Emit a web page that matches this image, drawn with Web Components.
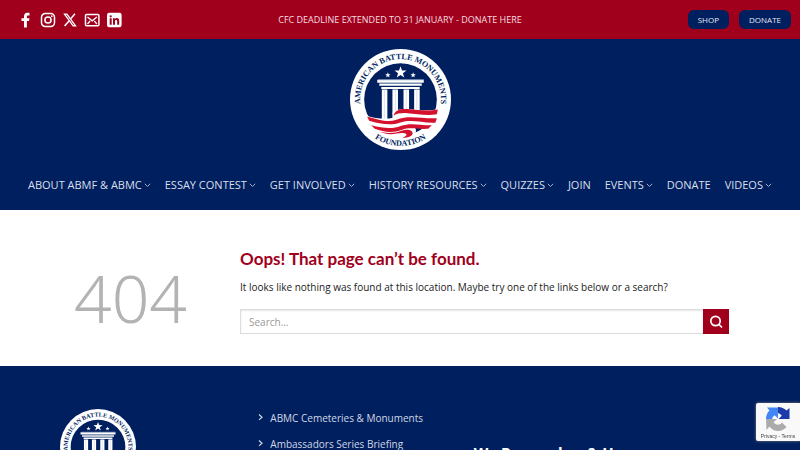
<!DOCTYPE html>
<html lang="en">
<head>
<meta charset="utf-8">
<meta name="viewport" content="width=device-width, initial-scale=1">
<title>Page not found - American Battle Monuments Foundation</title>
<style>
    html {
        scrollbar-width: none;
    }
    body {
        margin: 0;
        background: #fff;
        color: #222;
        font: 10px/16px "Open Sans", "Noto Sans", sans-serif;
        --navy: #001f5f;
        --red: #a0001c;
    }
</style>
</head>
<body>
<top-bar>
    <social-links slot="left"></social-links>
    CFC DEADLINE EXTENDED TO 31 JANUARY - DONATE HERE
    <pill-link slot="right" href="#shop">SHOP</pill-link>
    <pill-link slot="right" href="#donate">DONATE</pill-link>
</top-bar>
<site-header>
    <abmf-logo slot="logo"></abmf-logo>
    <nav-item href="#about" menu>ABOUT ABMF &amp; ABMC</nav-item>
    <nav-item href="#essay" menu>ESSAY CONTEST</nav-item>
    <nav-item href="#involved" menu>GET INVOLVED</nav-item>
    <nav-item href="#history" menu>HISTORY RESOURCES</nav-item>
    <nav-item href="#quizzes" menu>QUIZZES</nav-item>
    <nav-item href="#join">JOIN</nav-item>
    <nav-item href="#events" menu>EVENTS</nav-item>
    <nav-item href="#donate">DONATE</nav-item>
    <nav-item href="#videos" menu>VIDEOS</nav-item>
</site-header>
<not-found>
    <span slot="title">Oops! That page can’t be found.</span>
    It looks like nothing was found at this location. Maybe try one of the links below or a search?
    <search-form slot="search"></search-form>
</not-found>
<site-footer>
    <abmf-logo slot="logo"></abmf-logo>
    <footer-link href="#cemeteries">ABMC Cemeteries &amp; Monuments</footer-link>
    <footer-link href="#briefing">Ambassadors Series Briefing</footer-link>
    <span slot="motto">We Remember &amp; Honor</span>
</site-footer>
<recaptcha-badge></recaptcha-badge>

<script>
// attaches an open shadow root filled from a template
class BaseElement extends HTMLElement {
    constructor() {
        super();
        const template = document.createElement('template');
        template.innerHTML = this.constructor.markup;
        this.attachShadow({ mode: 'open' });
        this.shadowRoot.appendChild(template.content.cloneNode(true));
        const link = this.shadowRoot.querySelector('a[data-host]');
        if (link) {
            link.href = this.getAttribute('href') || '#';
        }
    }
}

class TopBar extends BaseElement {
    static markup = `
        <style>
            :host {
                display: grid;
                grid-template-columns: 1fr auto 1fr;
                align-items: center;
                padding: 10px 9px;
                background: var(--red);
                color: #f5dde1;
                font-size: 9px;
                line-height: 19px;
            }
            .right {
                display: flex;
                justify-content: flex-end;
                gap: 10px;
            }
        </style>
        <slot name="left"></slot>
        <div><slot></slot></div>
        <div class="right"><slot name="right"></slot></div>
    `;
}

class SocialLinks extends BaseElement {
    static markup = `
        <style>
            :host {
                display: flex;
                gap: 6px;
                padding-left: 9px;
            }
            a {
                display: flex;
                color: #fff;
            }
            svg {
                width: 16px;
                height: 16px;
            }
        </style>
        <a href="#facebook" aria-label="Facebook"><svg viewBox="0 0 16 16" fill="currentColor"><path d="M6 15.500V9H3.500V6.200H6V4.200C6 2 7.300.700 9.200.700h2.300v2.700H10C9.100 3.400 8.900 3.800 8.900 4.500v1.700h2.600L11 9H8.900v6.500z"/></svg></a>
        <a href="#instagram" aria-label="Instagram"><svg viewBox="0 0 16 16" fill="none" stroke="currentColor" stroke-width="1.500"><rect x="1.500" y="1.500" width="13" height="13" rx="3.800"/><circle cx="8" cy="8" r="3.100"/><circle cx="11.800" cy="4.200" r=".9" fill="currentColor" stroke="none"/></svg></a>
        <a href="#x" aria-label="X"><svg viewBox="0 0 16 16" fill="none" stroke="currentColor"><path d="M2.500 2.200h2.400l8.600 11.600h-2.400z" stroke-width="1.300"/><path d="M13 1.800 8.900 6.600M7 8.900 2.600 14.100" stroke-width="1.500"/></svg></a>
        <a href="#email" aria-label="Email"><svg viewBox="0 0 16 16" fill="none" stroke="currentColor" stroke-width="1.500"><rect x="1.500" y="2.500" width="13.400" height="11.200" rx="1"/><path d="M3.500 5 8.200 8.800 12.900 5M3.500 12l2.600-3M12.900 12 10.300 9" stroke-width="1.300"/></svg></a>
        <a href="#linkedin" aria-label="LinkedIn"><svg viewBox="0 0 16 16"><rect x="1" y=".7" width="14.600" height="14.600" rx="2.200" fill="currentColor"/><g fill="#a0001c"><circle cx="4.700" cy="4.300" r="1.150"/><path d="M3.700 6.300h2v6.400h-2zM7 6.300h1.900v.9c.5-.7 1.100-1.100 2-1.100 1.700 0 2.300 1.100 2.300 2.900v3.700h-2V9.300c0-.9-.3-1.400-1-1.400-.8 0-1.200.5-1.200 1.400v3.400H7z"/></g></svg></a>
    `;
}

class PillLink extends BaseElement {
    static markup = `
        <style>
            :host { display: block; }
            a {
                display: block;
                padding: 0 10px;
                border-radius: 6px;
                background: var(--navy);
                color: #e6eaf2;
                font-size: 8px;
                text-decoration: none;
            }
        </style>
        <a data-host><slot></slot></a>
    `;
}

class AbmfLogo extends BaseElement {
    static markup = `
        <style>
            :host { display: block; }
            svg {
                display: block;
                width: 100%;
            }
            text {
                fill: #001f5f;
                font-family: "Liberation Serif", serif;
                font-weight: bold;
                text-anchor: middle;
            }
        </style>
        <svg viewBox="0 0 100 100" role="img" aria-label="American Battle Monuments Foundation">
            <circle cx="50" cy="50" r="50" fill="#fff"/>
            <circle cx="50" cy="50" r="36" fill="#001f5f"/>
            <path id="upper" d="M50 90A40 40 0 0 1 50 10A40 40 0 0 1 50 90" fill="none"/>
            <path id="lower" d="M4 50A46 46 0 0 0 96 50" fill="none"/>
            <text font-size="8"><textPath href="#upper" startOffset="50%">AMERICAN BATTLE MONUMENTS</textPath></text>
            <text font-size="8"><textPath href="#lower" startOffset="50%">FOUNDATION</textPath></text>
            <g fill="#fff">
                <path d="M50 17l1.500 4.200 4.500.1-3.600 2.700 1.300 4.300L50 25.700l-3.700 2.600 1.300-4.300-3.600-2.700 4.500-.1z"/>
                <path id="star" d="M37.500 23l.7 1.900 2 .1-1.600 1.200.6 2-1.700-1.200-1.700 1.200.6-2-1.600-1.200 2-.1z"/>
                <use href="#star" x="25"/>
                <path d="M27 30.500h46v3H27zM29 34.500h42v2H29zM31 37.500h38v2H31z"/>
                <path d="M31.500 40h5.500v30h-5.500zM42 40h5.500v31H42zM53 40h5.500v25H53zM63.500 40H69v25h-5.500z"/>
            </g>
            <path d="M28 30.500h45M29 34h42" stroke="#9aa8c4" stroke-width=".8"/>
            <path d="M34 40v30M45 40v30M55.700 40v22M66.200 40v22" stroke="#c5cde0" stroke-width=".6"/>
            <path d="M16 66c10 3 19 4 27 2l-1-5c9-8 27 0 44-3l-1 12c-5 6-13 5-21 5 4 6-1 11-11 11C37 88 23 81 16 66z" fill="#fff"/>
            <g fill="#d5122e">
                <path d="M43 66c2-6 7-7 14-6.500 10 .8 20 2.500 30 .5l-1 4.500c-10 2-20-.5-29-1-6-.3-10 0-14 2.500z"/>
                <path d="M17 67c12 3 20 6 29 3 13-5 23-1 40-1.500l-1.500 4.500C70 73.500 62 69 49 73c-8 2.700-19 1.500-30-2z"/>
                <path d="M21 75.500c12 3 21 4 29 .8 11-4 20-.3 31-.8l-3.500 3.500c-10 .8-18-2-26 1-9 3.400-18 2.500-27-1z"/>
                <path d="M29 82c7 1.800 16 1.500 22-1 6-2.200 11-.5 11 2.500 0 3-5 4.500-10 4.500 4-2 5.500-3.500 2-4.500-6-1.500-13 3.500-25-1.500z"/>
            </g>
        </svg>
    `;
}

class SiteHeader extends BaseElement {
    static markup = `
        <style>
            :host {
                display: block;
                background: var(--navy);
            }
            .logo {
                width: 101px;
                margin: 0 auto;
                padding: 10px 0 11px;
            }
            nav {
                display: flex;
                justify-content: space-between;
                padding: 16px 28px 17px;
            }
        </style>
        <div class="logo"><slot name="logo"></slot></div>
        <nav><slot></slot></nav>
    `;
}

class NavItem extends BaseElement {
    static markup = `
        <style>
            :host { display: block; }
            a {
                display: flex;
                align-items: center;
                gap: 2px;
                color: #d9dfea;
                font-size: 11px;
                text-decoration: none;
                white-space: nowrap;
            }
            svg {
                display: none;
                width: 7px;
                height: 6px;
            }
            :host([menu]) svg { display: block; }
        </style>
        <a data-host><slot></slot><svg viewBox="0 0 7 6" fill="none" stroke="#a3aec8" stroke-width="1"><path d="M.8 1.800 3.500 4.500 6.200 1.800"/></svg></a>
    `;
}

class NotFound extends BaseElement {
    static markup = `
        <style>
            :host {
                display: grid;
                grid-template-columns: 1fr 3fr;
                max-width: 676px;
                margin: 0 auto;
                padding: 37px 0 32px;
            }
            .code {
                padding: 12px 32px 0 0;
                align-self: center;
                color: #b3b3b3;
                font: 300 66px/64px "Noto Sans", "Open Sans", sans-serif;
                text-align: center;
            }
            .content { padding: 0 9px; }
            h1 {
                margin: 0 0 8px;
                color: var(--red);
                font: bold 17px/24px Lato, sans-serif;
            }
            p { margin: 0 0 14px; }
        </style>
        <div class="code">404</div>
        <div class="content">
            <h1><slot name="title"></slot></h1>
            <p><slot></slot></p>
            <slot name="search"></slot>
        </div>
    `;
}

class SearchForm extends BaseElement {
    static markup = `
        <style>
            :host { display: block; }
            form { display: flex; }
            input {
                flex: 1;
                min-width: 0;
                box-sizing: border-box;
                height: 25px;
                margin: 0;
                padding: 0 8px;
                border: 1px solid #ddd;
                border-right: 0;
                border-radius: 0;
                background: #fff;
                box-shadow: inset 0 1px 2px rgba(0, 0, 0, .1);
                color: #333;
                font: inherit;
            }
            input::placeholder { color: #999; }
            button {
                display: flex;
                align-items: center;
                justify-content: center;
                width: 26px;
                height: 25px;
                padding: 0;
                border: 0;
                background: var(--red);
            }
            svg {
                width: 14px;
                height: 14px;
            }
        </style>
        <form role="search">
            <input type="search" placeholder="Search…" aria-label="Search for:">
            <button type="submit" aria-label="Submit"><svg viewBox="0 0 14 14" fill="none" stroke="#fff" stroke-width="1.700"><circle cx="6.500" cy="6" r="4.700"/><path d="m9.500 9 3.500 3.500"/></svg></button>
        </form>
    `;
}

class SiteFooter extends BaseElement {
    static markup = `
        <style>
            :host {
                display: block;
                background: var(--navy);
                color: #fff;
            }
            .row {
                display: grid;
                grid-template-columns: 35fr 38fr 47fr;
                max-width: 680px;
                margin: 0 auto;
                padding: 39px 0 24px;
            }
            .logo {
                width: 76px;
                padding-top: 4px;
            }
            h2 {
                margin: 35px 0 0;
                font-size: 15px;
                line-height: 24px;
            }
        </style>
        <div class="row">
            <div class="logo"><slot name="logo"></slot></div>
            <div><slot></slot></div>
            <h2><slot name="motto"></slot></h2>
        </div>
    `;
}

class FooterLink extends BaseElement {
    static markup = `
        <style>
            :host { display: block; }
            a {
                display: flex;
                align-items: center;
                gap: 7px;
                padding: 5px 0;
                color: #d0d7e5;
                text-decoration: none;
                white-space: nowrap;
            }
            svg {
                width: 5px;
                height: 8px;
            }
        </style>
        <a data-host><svg viewBox="0 0 5 8" fill="none" stroke="currentColor" stroke-width="1.200"><path d="m1 .5 3 2.700-3 2.700"/></svg><slot></slot></a>
    `;
}

class RecaptchaBadge extends BaseElement {
    static markup = `
        <style>
            :host {
                position: fixed;
                right: 0;
                bottom: 9px;
                display: flex;
                flex-direction: column;
                align-items: center;
                box-sizing: border-box;
                width: 44px;
                padding: 3px 0 1px;
                border-radius: 2px 0 0 2px;
                background: #f9f9f9;
                box-shadow: 0 0 3px #808080;
                color: #444;
                font: 5px/8px "Liberation Sans", sans-serif;
            }
            svg {
                width: 26px;
                height: 26px;
            }
            a {
                color: inherit;
                text-decoration: none;
            }
        </style>
        <svg viewBox="0 0 26 26" aria-hidden="true">
            <path d="M13 1a12 12 0 0 1 8.500 3.500L24.500 2v11h-11l3.300-3.300A6 6 0 0 0 13 7z" fill="#1c3aa9"/>
            <path d="M1 13A12 12 0 0 1 4.500 4.500L2 1.500h11v11L9.700 9.200A6 6 0 0 0 7 13z" fill="#4285f4"/>
            <path d="M1 13h11l-3.500 3.300c2.500 3.500 6.500 3 8.500.2l4.500 4.500C16.500 27 8.500 26 4.500 20.500L1.500 24z" fill="#ababab"/>
        </svg>
        <div><a href="#privacy">Privacy</a> - <a href="#terms">Terms</a></div>
    `;
}

customElements.define('top-bar', TopBar);
customElements.define('social-links', SocialLinks);
customElements.define('pill-link', PillLink);
customElements.define('abmf-logo', AbmfLogo);
customElements.define('site-header', SiteHeader);
customElements.define('nav-item', NavItem);
customElements.define('not-found', NotFound);
customElements.define('search-form', SearchForm);
customElements.define('site-footer', SiteFooter);
customElements.define('footer-link', FooterLink);
customElements.define('recaptcha-badge', RecaptchaBadge);
</script>
</body>
</html>
